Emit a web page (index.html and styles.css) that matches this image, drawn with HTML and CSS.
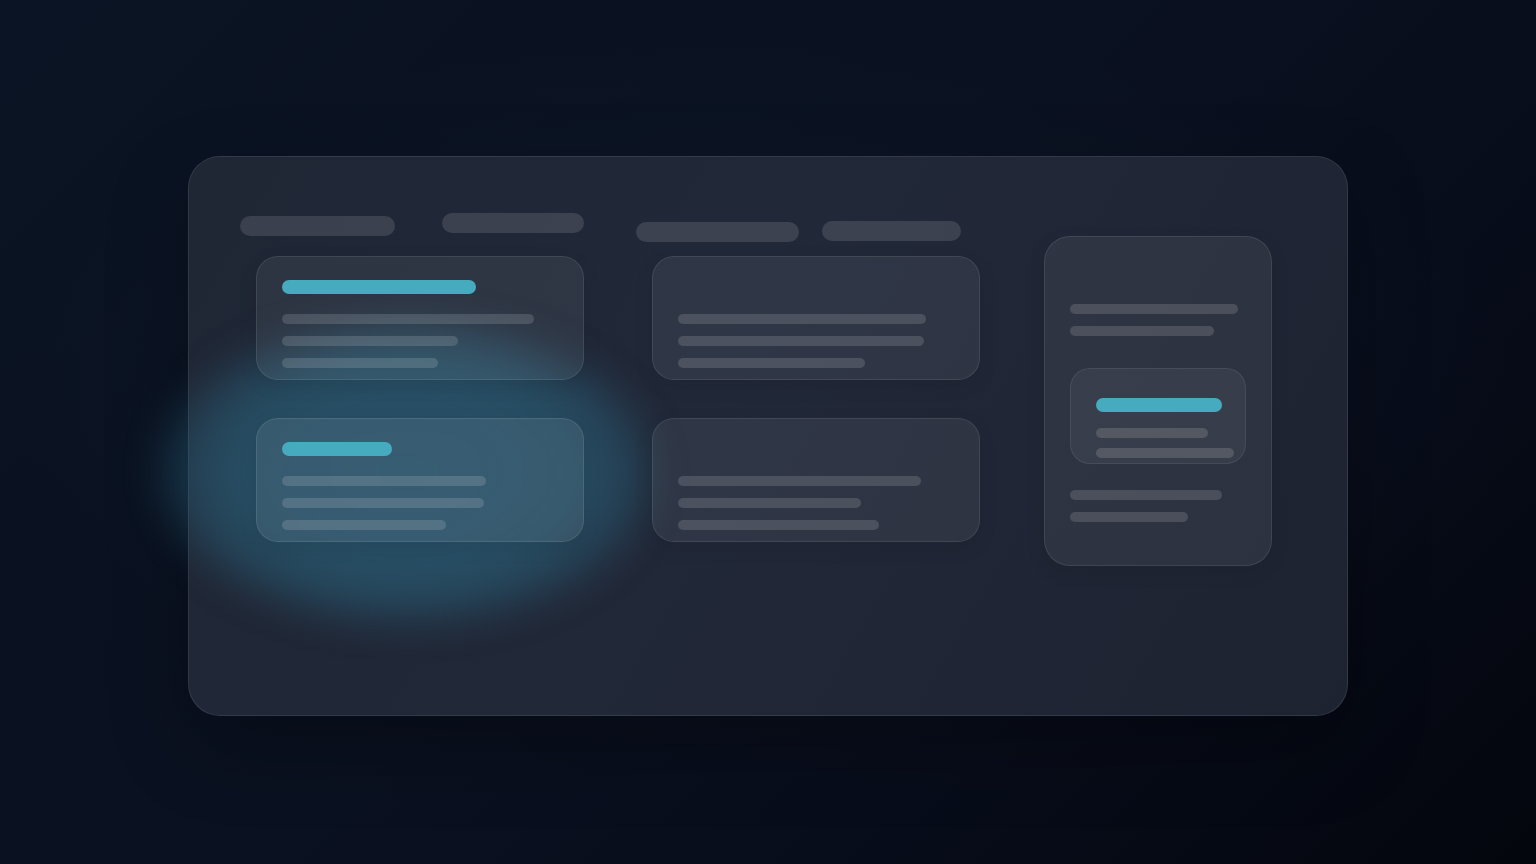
FILE: index.html
```html
<!DOCTYPE html>
<html lang="en">
<head>
<meta charset="utf-8">
<title>Board skeleton</title>
<link rel="stylesheet" href="styles.css">
</head>
<body>
<main class="stage">
  <section class="panel">
    <div class="glow"></div>
    <div class="col col-a">
      <div class="col-head">
        <span class="pill pill-a1"></span>
        <span class="pill pill-a2"></span>
      </div>
      <div class="card">
        <span class="bar" style="width:194px"></span>
        <span class="line" style="width:252px"></span>
        <span class="line" style="width:176px"></span>
        <span class="line" style="width:156px"></span>
      </div>
      <div class="card card-lit">
        <span class="bar" style="width:110px"></span>
        <span class="line" style="width:204px"></span>
        <span class="line" style="width:202px"></span>
        <span class="line" style="width:164px"></span>
      </div>
    </div>
    <div class="col col-b">
      <div class="col-head">
        <span class="pill pill-b1"></span>
        <span class="pill pill-b2"></span>
      </div>
      <div class="card">
        <span class="bar bar-empty"></span>
        <span class="line" style="width:248px"></span>
        <span class="line" style="width:246px"></span>
        <span class="line" style="width:187px"></span>
      </div>
      <div class="card">
        <span class="bar bar-empty"></span>
        <span class="line" style="width:243px"></span>
        <span class="line" style="width:183px"></span>
        <span class="line" style="width:201px"></span>
      </div>
    </div>
    <div class="col col-c">
      <div class="tall">
        <span class="line" style="width:168px"></span>
        <span class="line" style="width:144px"></span>
        <div class="mini">
          <span class="bar" style="width:126px"></span>
          <span class="line" style="width:112px"></span>
          <span class="line" style="width:138px"></span>
        </div>
        <span class="line line-after" style="width:152px"></span>
        <span class="line" style="width:118px"></span>
      </div>
    </div>
  </section>
</main>
</body>
</html>
```
FILE: styles.css
```css
* { box-sizing: border-box; }

html, body {
  margin: 0;
  height: 100%;
}

body {
  font-family: "Inter", "Liberation Sans", sans-serif;
  background:
    radial-gradient(ellipse 70% 60% at 50% 45%, rgba(20, 32, 52, 0.5) 0%, rgba(20, 32, 52, 0) 70%),
    linear-gradient(135deg, #0b1424 0%, #0a1120 45%, #080d1b 70%, #03060d 100%);
  overflow: hidden;
}

.stage {
  height: 864px;
  display: flex;
  justify-content: center;
  align-items: flex-start;
  padding-top: 156px;
}

.panel {
  position: relative;
  width: 1160px;
  height: 560px;
  border-radius: 32px;
  border: 1px solid rgba(255, 255, 255, 0.09);
  background: linear-gradient(120deg, #1f2634 0%, #212838 45%, #1e2331 100%);
  display: flex;
  align-items: flex-start;
  padding: 56px 0 0 51px;
  box-shadow: 0 30px 80px rgba(0, 0, 0, 0.3);
}

.glow {
  position: absolute;
  left: -30px;
  top: 162px;
  width: 494px;
  height: 306px;
  border-radius: 50%;
  background: radial-gradient(ellipse at 50% 50%, rgba(46, 112, 140, 0.58) 0%, rgba(46, 112, 140, 0.52) 50%, rgba(46, 112, 140, 0.2) 72%, rgba(46, 112, 140, 0) 85%);
  filter: blur(18px);
  pointer-events: none;
  z-index: 0;
}

.col {
  position: relative;
  z-index: 1;
  display: flex;
  flex-direction: column;
}

.col-a { width: 344px; }
.col-b { width: 344px; margin-left: 52px; }
.col-c { margin-left: 64px; padding-top: 23px; }

.col-head {
  height: 43px;
  display: flex;
  align-items: flex-start;
}

.pill {
  display: block;
  height: 20px;
  border-radius: 10px;
  background: rgba(255, 255, 255, 0.12);
}

.pill-a1 { width: 155px; margin-top: 3px; }
.pill-a2 { width: 142px; margin-left: 47px; }
.pill-b1 { width: 163px; margin-top: 9px; }
.pill-b2 { width: 139px; margin-top: 8px; margin-left: 23px; }

.card {
  width: 328px;
  height: 124px;
  margin-left: 16px;
  border-radius: 22px;
  border: 1px solid rgba(255, 255, 255, 0.09);
  background: rgba(255, 255, 255, 0.065);
  padding: 23px 25px;
  display: flex;
  flex-direction: column;
  align-items: flex-start;
  gap: 12px;
  box-shadow: 0 6px 20px rgba(0, 0, 0, 0.08);
}

.card + .card { margin-top: 38px; }

.card-lit {
  background: rgba(255, 255, 255, 0.08);
  border-color: rgba(255, 255, 255, 0.1);
}

.bar {
  display: block;
  height: 14px;
  border-radius: 7px;
  background: #46abbe;
  margin-bottom: 8px;
  flex: none;
}

.bar-empty { background: transparent; width: 10px; }

.line {
  display: block;
  height: 10px;
  border-radius: 5px;
  background: rgba(255, 255, 255, 0.14);
  flex: none;
}

.tall {
  width: 228px;
  height: 330px;
  border-radius: 26px;
  border: 1px solid rgba(255, 255, 255, 0.09);
  background: rgba(255, 255, 255, 0.065);
  padding: 67px 25px 0;
  display: flex;
  flex-direction: column;
  align-items: flex-start;
  gap: 12px;
  box-shadow: 0 6px 20px rgba(0, 0, 0, 0.08);
}

.mini {
  width: 176px;
  height: 96px;
  margin-top: 20px;
  border-radius: 20px;
  border: 1px solid rgba(255, 255, 255, 0.08);
  background: rgba(255, 255, 255, 0.05);
  padding: 29px 25px 0;
  display: flex;
  flex-direction: column;
  align-items: flex-start;
  gap: 10px;
}

.mini .bar { margin-bottom: 6px; }

.line-after { margin-top: 14px; }
```
